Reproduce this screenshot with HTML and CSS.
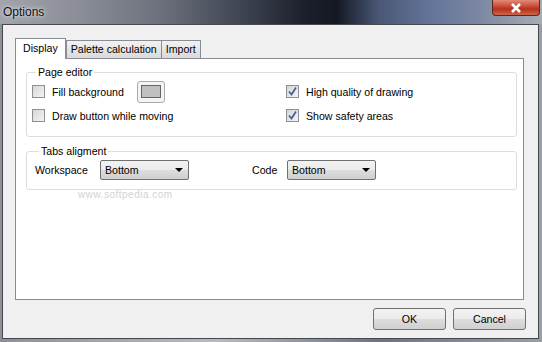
FILE: index.html
```html
<!DOCTYPE html>
<html lang="en">

<head>
    <meta charset="UTF-8">
    <title>Options</title>
    <link rel="stylesheet" href="styles.css">
</head>

<body>
    <div class="window">
        <div class="titlebar">
            <span class="title">Options</span>
            <div class="close">
                <svg width="14" height="10" viewBox="0 0 14 10">
                    <path d="M3 1 L11 9 M11 1 L3 9" stroke="#fff" stroke-width="2.6" />
                </svg>
            </div>
        </div>
        <div class="client">
            <div class="tabs">
                <div class="tab active">Display</div>
                <div class="tab">Palette calculation</div>
                <div class="tab">Import</div>
            </div>
            <div class="panel">
                <fieldset class="group">
                    <legend>Page editor</legend>
                    <div class="grid">
                        <div class="row">
                            <span class="check"></span>
                            <span class="fill-label">Fill background</span>
                            <span class="swatch"><span class="swatch-inner"></span></span>
                        </div>
                        <div class="row">
                            <span class="check checked">
                                <svg width="11" height="11" viewBox="0 0 11 11">
                                    <path d="M2 5.5 L4.5 8.5 L9 1.5" fill="none" stroke="#4a5f9a" stroke-width="1.8" />
                                </svg>
                            </span>
                            <span>High quality of drawing</span>
                        </div>
                        <div class="row">
                            <span class="check"></span>
                            <span>Draw button while moving</span>
                        </div>
                        <div class="row">
                            <span class="check checked">
                                <svg width="11" height="11" viewBox="0 0 11 11">
                                    <path d="M2 5.5 L4.5 8.5 L9 1.5" fill="none" stroke="#4a5f9a" stroke-width="1.8" />
                                </svg>
                            </span>
                            <span>Show safety areas</span>
                        </div>
                    </div>
                </fieldset>
                <fieldset class="group second">
                    <legend>Tabs aligment</legend>
                    <div class="align-row">
                        <span class="lbl-ws">Workspace</span>
                        <div class="select">Bottom<span class="arrow"></span></div>
                        <span class="lbl-code">Code</span>
                        <div class="select">Bottom<span class="arrow"></span></div>
                    </div>
                </fieldset>
                <div class="watermark">www.softpedia.com</div>
            </div>
            <div class="buttons">
                <div class="btn">OK</div>
                <div class="btn">Cancel</div>
            </div>
        </div>
    </div>
</body>

</html>
```

FILE: styles.css
```css
body {
    margin: 0;
    width: 542px;
    height: 342px;
    overflow: hidden;
    background: linear-gradient(to right, #8e9098, #b8bac0 40%, #6e7380 70%, #9a9ea6);
    font-family: "Liberation Sans", Arial, sans-serif;
    font-size: 10.6px;
    color: #000;
}

.window {
    display: flex;
    flex-direction: column;
    height: 342px;
}

.titlebar {
    height: 24px;
    display: flex;
    align-items: flex-start;
    background: linear-gradient(to right, #a2a4ac 0%, #8a8d96 15%, #6c707c 30%, #3e4352 45%, #1c202c 56%, #141822 62%, #4a5876 70%, #66769a 80%, #7a86a2 88%, #a8acb4 100%);
}

.title {
    font-size: 12px;
    padding: 5px 0 0 3px;
    color: #111;
    text-shadow: 0 0 6px #d8dadf, 0 0 3px #e6e8ec;
}

.close {
    margin-left: auto;
    margin-right: 2px;
    width: 46px;
    height: 15px;
    border: 1px solid #5a2a22;
    border-top: none;
    border-radius: 0 0 4px 4px;
    background: linear-gradient(#e08a7a, #c8482f 45%, #b3321c 60%, #d0634a);
    display: flex;
    align-items: center;
    justify-content: center;
}

.client {
    margin: 0 3px 3px 2px;
    flex: 1;
    background: #f0f0f0;
    border: 1px solid #46484e;
    padding: 13px 12px 0 12px;
}

.tabs {
    display: flex;
    align-items: flex-end;
    height: 20px;
}

.tab {
    height: 17px;
    padding: 0 4px 0 4px;
    line-height: 17px;
    border: 1px solid #898c95;
    border-bottom: none;
    border-left: none;
    background: linear-gradient(#f2f2f2, #e6e6e6 50%, #d9d9d9);
}

.tab:nth-child(2) {
    border-left: 1px solid #898c95;
}

.tab.active {
    height: 20px;
    line-height: 19px;
    padding: 0 7px;
    background: #fff;
    border-left: 1px solid #898c95;
    margin-bottom: -1px;
    position: relative;
    z-index: 1;
}

.panel {
    position: relative;
    height: 233px;
    background: #fff;
    border: 1px solid #898c95;
    margin-right: 2px;
    padding-top: 7px;
}

.group {
    margin: 0 6px 0 10px;
    border: 1px solid #d5dfe5;
    border-radius: 3px;
    padding: 3px 0 10px 5px;
}

.group legend {
    padding: 0 2px;
    margin-left: 4px;
}

.group.second {
    margin-top: 8px;
    padding: 3px 0 9px 8px;
}

.grid {
    display: grid;
    grid-template-columns: 254px 1fr;
    row-gap: 3px;
}

.row {
    display: flex;
    align-items: center;
    height: 21px;
}

.check {
    width: 11px;
    height: 11px;
    border: 1px solid #8e8f8f;
    background: linear-gradient(135deg, #d6d6d6, #f4f4f4);
    margin-right: 7px;
    display: flex;
}

.fill-label {
    width: 85px;
}

.swatch {
    width: 26px;
    height: 20px;
    border: 1px solid #a9a9a9;
    border-radius: 3px;
    background: #f4f4f4;
    display: flex;
    align-items: center;
    justify-content: center;
}

.swatch-inner {
    width: 18px;
    height: 11px;
    background: #c0c0c0;
    border: 1px solid #646464;
}

.align-row {
    display: flex;
    align-items: center;
}

.lbl-ws {
    width: 65px;
}

.lbl-code {
    margin-left: 63px;
    width: 35px;
}

.select {
    position: relative;
    width: 83px;
    height: 18px;
    line-height: 18px;
    padding-left: 4px;
    border: 1px solid #707070;
    border-radius: 2px;
    background: linear-gradient(#f2f2f2, #ebebeb 50%, #dddddd 51%, #cfcfcf);
}

.arrow {
    position: absolute;
    right: 5px;
    top: 7px;
    border-left: 4px solid transparent;
    border-right: 4px solid transparent;
    border-top: 4px solid #000;
}

.watermark {
    position: absolute;
    left: 62px;
    top: 130px;
    color: #d2d2d2;
    font-size: 10px;
    letter-spacing: 0.5px;
}

.buttons {
    display: flex;
    justify-content: flex-end;
    gap: 7px;
    margin-top: 8px;
}

.btn {
    width: 71px;
    height: 20px;
    line-height: 20px;
    text-align: center;
    border: 1px solid #707070;
    border-radius: 3px;
    background: linear-gradient(#f2f2f2, #ebebeb 50%, #dddddd 51%, #cfcfcf);
}
```
